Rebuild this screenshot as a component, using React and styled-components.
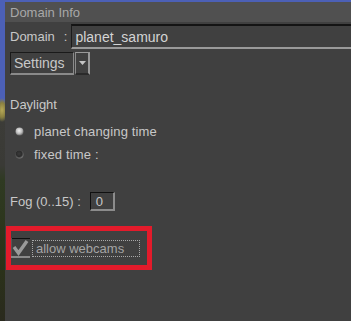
import React from 'react'
import styled, { createGlobalStyle } from 'styled-components'

const Global = createGlobalStyle`
  html, body { margin: 0; padding: 0; }
  body { font-family: "Liberation Sans", Arial, sans-serif; }
`

const Scene = styled.div`
  width: 351px;
  height: 321px;
  overflow: hidden;
  display: flex;
  padding: 2px 0 0 5px;
  box-sizing: border-box;
  background:
    radial-gradient(ellipse 6px 12px at 2px 110px, #b8aa58 0%, #8a8040 60%, transparent 100%),
    linear-gradient(to bottom, #4c60b6 0px, #4c60b6 100px, #56604e 112px, #3c3c38 122px, #3a3a36 165px, #2f3a22 180px, #2b3319 260px, #2a2a1e 321px);
`

const Panel = styled.div`
  flex: 1;
  background: #404040;
  display: flex;
  flex-direction: column;
  color: #c8c8c8;
  font-size: 13px;
`

const TitleBar = styled.div`
  height: 20px;
  background: #505050;
  color: #a8a8a8;
  padding-left: 5px;
  display: flex;
  align-items: center;
  font-size: 13px;
`

const Body = styled.div`
  display: flex;
  flex-direction: column;
  padding: 2px 0 0 5px;
`

const Row = styled.div`
  display: flex;
  align-items: center;
  margin-top: ${p => p.$top || 0}px;
  height: ${p => p.$h || 16}px;
`

const Label = styled.span`
  white-space: nowrap;
  color: #c8c8c8;
  letter-spacing: ${p => p.$ls || 0}px;
`

const Colon = styled.span`
  margin: 0 4px 0 9px;
`

const TextField = styled.div`
  flex: 1;
  height: 100%;
  box-sizing: border-box;
  border-top: 2px solid #141414;
  border-left: 1px solid #1c1c1c;
  border-bottom: 2px solid #9a9a9a;
  padding-left: 3px;
  display: flex;
  align-items: center;
  color: #d4d4d4;
  font-size: 14px;
`

const Select = styled.div`
  display: flex;
  height: 23px;
`

const SelectValue = styled.div`
  width: 64px;
  box-sizing: border-box;
  border-top: 1px solid #1a1a1a;
  border-left: 1px solid #1a1a1a;
  border-bottom: 2px solid #8a8a8a;
  border-right: 1px solid #8a8a8a;
  padding-left: 3px;
  display: flex;
  align-items: center;
  font-size: 14px;
  color: #c8c8c8;
`

const SelectButton = styled.div`
  width: 15px;
  margin-left: 1px;
  box-sizing: border-box;
  border: 1px solid #8a8a8a;
  border-top-color: #9a9a9a;
  border-bottom: 2px solid #2a2a2a;
  border-right: 2px solid #9a9a9a;
  display: flex;
  align-items: center;
  justify-content: center;
`

const RadioRow = styled(Row)`
  padding-left: 5px;
  gap: 10px;
`

const FogInput = styled.div`
  width: 25px;
  height: 19px;
  box-sizing: border-box;
  margin-left: 9px;
  border-top: 1px solid #101010;
  border-left: 1px solid #101010;
  border-bottom: 2px solid #8c8c8c;
  border-right: 2px solid #8c8c8c;
  padding-left: 5px;
  display: flex;
  align-items: center;
  color: #c8c8c8;
  font-size: 13px;
`

const Highlight = styled.div`
  margin-left: -4px;
  width: 146px;
  height: 44px;
  box-sizing: border-box;
  border: 5px solid #e31b2b;
  display: flex;
  align-items: center;
`

const Focus = styled.div`
  margin-left: 2px;
  height: 17px;
  width: 108px;
  box-sizing: border-box;
  border: 1px dotted #a8a8a8;
  display: flex;
  align-items: center;
  padding-left: 3px;
  color: #a4a4a4;
  font-size: 13px;
  white-space: nowrap;
`

const Radio = ({ checked }) => (
  <svg width="9" height="9" viewBox="0 0 9 9">
    <defs>
      <radialGradient id={checked ? 'rOn' : 'rOff'} cx="0.45" cy="0.4" r="0.6">
        <stop offset="0" stopColor={checked ? '#f2f2f2' : '#3a3a3a'} />
        <stop offset="0.6" stopColor={checked ? '#bcbcbc' : '#2c2c2c'} />
        <stop offset="1" stopColor={checked ? '#6a6a6a' : '#7a7a7a'} />
      </radialGradient>
    </defs>
    <circle cx="4.5" cy="4.5" r="4" fill={`url(#${checked ? 'rOn' : 'rOff'})`} />
  </svg>
)

const Check = () => (
  <svg width="19" height="20" viewBox="0 0 19 20">
    <rect x="0" y="0" width="19" height="20" fill="#404040" />
    <line x1="0" y1="0.5" x2="19" y2="0.5" stroke="#101010" />
    <line x1="0.5" y1="0" x2="0.5" y2="20" stroke="#555" />
    <line x1="0" y1="19" x2="19" y2="19" stroke="#8a8a8a" strokeWidth="2" />
    <polyline points="3,9 7.5,15 16,3" fill="none" stroke="#9a9a9a" strokeWidth="3.4" strokeLinejoin="miter" />
  </svg>
)

export default function App() {
  return (
    <Scene>
      <Global />
      <Panel>
        <TitleBar>Domain Info</TitleBar>
        <Body>
          <Row $h={25}>
            <Label>Domain</Label>
            <Colon>:</Colon>
            <TextField>planet_samuro</TextField>
          </Row>
          <Row $h={23} $top={3}>
            <Select>
              <SelectValue>Settings</SelectValue>
              <SelectButton>
                <svg width="7" height="4" viewBox="0 0 7 4">
                  <polygon points="0,0 7,0 3.5,4" fill="#c4c4c4" />
                </svg>
              </SelectButton>
            </Select>
          </Row>
          <Row $top={21}>
            <Label>Daylight</Label>
          </Row>
          <RadioRow $top={11}>
            <Radio checked />
            <Label $ls={0.15}>planet changing time</Label>
          </RadioRow>
          <RadioRow $top={7}>
            <Radio />
            <Label $ls={0.15}>fixed time :</Label>
          </RadioRow>
          <Row $h={19} $top={30}>
            <Label>Fog (0..15) :</Label>
            <FogInput>0</FogInput>
          </Row>
          <Row $h={44} $top={15}>
            <Highlight>
              <Check />
              <Focus>allow webcams</Focus>
            </Highlight>
          </Row>
        </Body>
      </Panel>
    </Scene>
  )
}
